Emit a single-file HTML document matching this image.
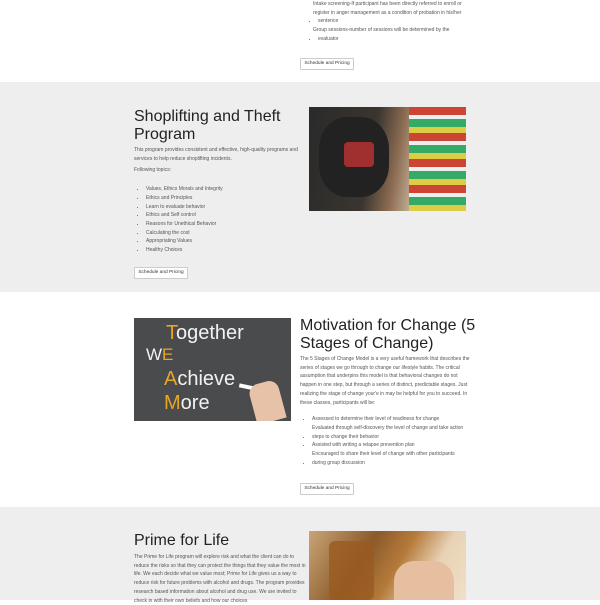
<!DOCTYPE html>
<html><head><meta charset="utf-8"><style>
*{margin:0;padding:0;box-sizing:border-box}
body{width:600px;height:600px;overflow:hidden;font-family:"Liberation Sans",sans-serif;color:#555;background:#fff}
.s{position:absolute;left:0;width:600px}
.g{background:#eeeeee}
.p{position:absolute;font-size:5px;line-height:8.7px;color:#555}
.h{position:absolute;font-size:16px;line-height:18px;color:#222}
ul{list-style:disc;padding-left:12px}
.btn{position:absolute;width:54px;height:12px;border:1px solid #ccc;background:#fff;font-size:4.8px;line-height:10px;text-align:center;color:#333;border-radius:1px}
.img{position:absolute;overflow:hidden}
</style></head><body>
<div class="s" style="top:0;height:82px"></div>
<div class="p" style="left:306px;top:0;width:175px">
<div style="padding-left:7px">Intake screening-If participant has been directly referred to enroll or</div>
<div style="padding-left:7px">register in anger management as a condition of probation in his/her</div>
<ul><li>sentence</li></ul>
<div style="padding-left:7px">Group sessions-number of sessions will be determined by the</div>
<ul><li>evaluator</li></ul>
</div>
<div class="btn" style="left:300px;top:58px">Schedule and Pricing</div>

<div class="s g" style="top:82px;height:210px"></div>
<div class="h" style="left:134px;top:108px;width:170px">Shoplifting and Theft Program</div>
<div class="p" style="left:134px;top:146px;width:176px">This program provides consistent and effective, high-quality programs and services to help reduce shoplifting incidents.
<div style="margin-top:3px">Following topics:</div>
<ul style="margin-top:10px;padding-left:12px">
<li>Values, Ethics Morals and Integrity</li><li>Ethics and Principles</li><li>Learn to evaluate behavior</li><li>Ethics and Self control</li><li>Reasons for Unethical Behavior</li><li>Calculating the cost</li><li>Appropriating  Values</li><li>Healthy Choices</li></ul></div>
<div class="btn" style="left:134px;top:267px">Schedule and Pricing</div>
<div class="img" style="left:309px;top:107px;width:157px;height:104px;background:linear-gradient(100deg,#2a2a2a 0%,#3a3530 40%,#8a6a50 55%,#c9b9a0 70%,#d8c8b0 100%)">
<div style="position:absolute;left:10px;top:10px;width:70px;height:80px;border-radius:40%;background:#222"></div>
<div style="position:absolute;left:35px;top:35px;width:30px;height:25px;background:#a03030;border-radius:4px"></div>
<div style="position:absolute;left:100px;top:0;width:57px;height:104px;background:repeating-linear-gradient(180deg,#c43 0 8px,#eee 8px 12px,#3a6 12px 20px,#dc4 20px 26px)"></div>
</div>

<div class="s" style="top:292px;height:215px"></div>
<div class="img" style="left:134px;top:318px;width:157px;height:103px;background:#4a4b4d;font-family:'Liberation Sans',sans-serif;color:#f2f2f2">
<div style="position:absolute;left:32px;top:4px;font-size:20px"><span style="color:#e8a52a">T</span>ogether</div>
<div style="position:absolute;left:12px;top:27px;font-size:17px">W<span style="color:#e8a52a">E</span></div>
<div style="position:absolute;left:30px;top:50px;font-size:20px"><span style="color:#e8a52a">A</span>chieve</div>
<div style="position:absolute;left:30px;top:74px;font-size:20px"><span style="color:#e8a52a">M</span>ore</div>
<div style="position:absolute;left:105px;top:68px;width:26px;height:4px;background:#fff;transform:rotate(12deg)"></div>
<div style="position:absolute;left:118px;top:64px;width:30px;height:40px;background:#e8c2a8;border-radius:10px 10px 0 0;transform:rotate(-15deg)"></div>
</div>
<div class="h" style="left:300px;top:317px;width:185px">Motivation for Change (5 Stages of Change)</div>
<div class="p" style="left:300px;top:355px;width:172px">The 5 Stages of Change Model is a very useful framework that describes the series of stages we go through to change our lifestyle habits. The critical assumption that underpins this model is that behavioral changes do not happen in one step, but through a series of distinct, predictable stages. Just realizing the stage of change your'e in may be helpful for you to succeed. In these classes, participants will be:
<ul style="margin-top:8px">
<li>Assessed to determine their level of readiness for change<br>Evaluated through self-discovery the level of change and take action</li><li>steps to change their behavior</li><li>Assisted with writing  a relapse prevention plan<br>Encouraged to share their level of change with other participants</li><li> during group discussion</li></ul></div>
<div class="btn" style="left:300px;top:483px">Schedule and Pricing</div>

<div class="s g" style="top:507px;height:93px"></div>
<div class="h" style="left:134px;top:532px;width:170px">Prime for Life</div>
<div class="p" style="left:134px;top:553px;width:172px">The Prime for Life program will explore risk and what the client can do to reduce the risks so that they can protect the things that they value the most in life. We each decide what we value most; Prime for Life gives us a way to reduce risk for future problems with alcohol and drugs. The program provides research based information about alcohol and drug use. We are invited to check in with their own beliefs and how our choices</div>
<div class="img" style="left:309px;top:531px;width:157px;height:69px;background:linear-gradient(120deg,#caa577 0%,#8a5a2a 35%,#b57a3a 55%,#e8d2b5 75%,#f0e0c8 100%)">
<div style="position:absolute;left:20px;top:10px;width:45px;height:59px;background:#9a5a20;border-radius:6px;opacity:.8"></div>
<div style="position:absolute;left:85px;top:30px;width:60px;height:39px;background:#e5bfa0;border-radius:20px 20px 0 0"></div>
</div>
</body></html>
